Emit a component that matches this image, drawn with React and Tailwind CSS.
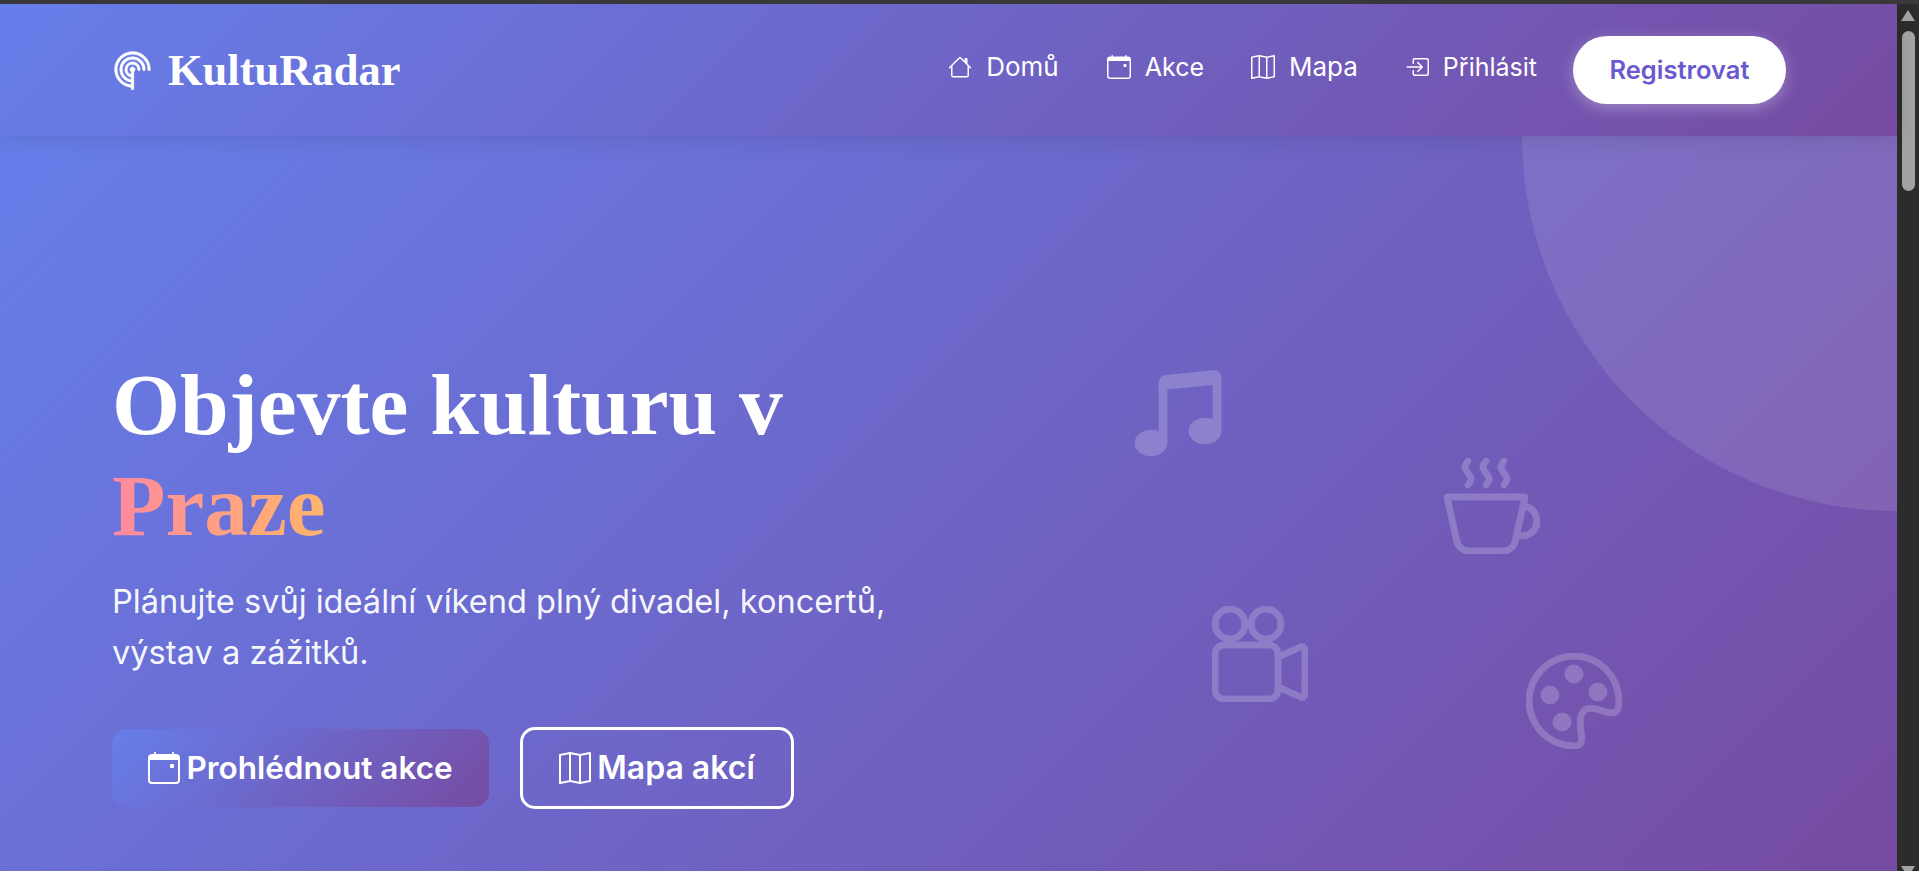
import { BsRadar, BsHouse, BsCalendarEvent, BsMap, BsBoxArrowInRight, BsMusicNoteBeamed, BsCupHot, BsCameraReels, BsPalette } from "react-icons/bs";

const NAV = [
  { label: "Domů", Icon: BsHouse, cls: "text-[26px]" },
  { label: "Akce", Icon: BsCalendarEvent, cls: "text-[25px] ml-[48px]" },
  { label: "Mapa", Icon: BsMap, cls: "text-[26px] ml-[47px]" },
  { label: "Přihlásit", Icon: BsBoxArrowInRight, cls: "text-[25px] ml-[47px]" },
];

function Header() {
  return (
    <header className="h-[132px] shrink-0 flex items-center justify-between pl-[112px] pr-[111px] bg-[linear-gradient(135deg,#667eea_0%,#764ba2_100%)] shadow-[0_4px_20px_rgba(0,0,0,0.1)] relative z-10">
      <div className="flex items-center gap-[15px] text-white">
        <BsRadar className="w-[41px] h-[41px] -mt-[2px]" stroke="currentColor" strokeWidth="0.2" />
        <span className="text-[44.5px] font-bold leading-none font-['Liberation_Serif',serif]">KultuRadar</span>
      </div>
      <nav className="flex items-center font-['Inter',sans-serif] text-white">
        {NAV.map(({ label, Icon, cls }) => (
          <a key={label} className={`flex items-center gap-[14px] leading-none -mt-[6px] ${cls}`}>
            <Icon className="w-[24px] h-[24px]" />
            {label}
          </a>
        ))}
        <button className="ml-[36px] w-[213px] h-[68px] rounded-full bg-white text-[#6a5acd] text-[25.5px] font-semibold shadow-[0_4px_15px_rgba(255,255,255,0.3)]">
          Registrovat
        </button>
      </nav>
    </header>
  );
}

function Hero() {
  return (
    <section className="relative flex-1 overflow-hidden bg-[linear-gradient(135deg,#667eea_0%,#764ba2_100%)] pl-[112px] pr-[112px] pt-[218px] flex text-white">
      {/* big circle in the corner */}
      <div className="absolute -top-[375px] -right-[375px] w-[750px] h-[750px] rounded-full bg-white/10" />

      <div className="w-[852px] shrink-0">
        <h1 className="text-[87.5px] leading-[101px] font-bold font-['Liberation_Serif',serif]">
          Objevte kulturu v
          <br />
          <span className="inline-block bg-[linear-gradient(90deg,#ff8a9f,#ffb56b)] bg-clip-text text-transparent">Praze</span>
        </h1>
        <p className="mt-[20px] text-[32.6px] leading-[51px] font-['Inter',sans-serif] text-white/95">
          Plánujte svůj ideální víkend plný divadel, koncertů,
          <br />
          výstav a zážitků.
        </p>
        <div className="mt-[49px] flex items-center gap-[31px] font-['Inter',sans-serif]">
          <button className="w-[377px] h-[78px] rounded-[15px] flex items-center justify-center gap-[6px] text-[31.5px] font-semibold bg-[linear-gradient(135deg,#667eea,#764ba2)]">
            <BsCalendarEvent className="w-[32px] h-[32px]" />
            Prohlédnout akce
          </button>
          <button className="w-[274px] h-[82px] rounded-[15px] border-[3px] border-white flex items-center justify-center gap-[6px] text-[32px] font-semibold">
            <BsMap className="w-[32px] h-[32px]" />
            Mapa akcí
          </button>
        </div>
      </div>

      {/* floating icons, white at low opacity */}
      <div className="relative flex-1 text-white">
        <BsMusicNoteBeamed className="absolute left-[166px] top-[11px] w-[96px] h-[96px] opacity-20" stroke="currentColor" strokeWidth="0.45" strokeLinejoin="round" />
        <BsCupHot className="absolute left-[480px] top-[104px] w-[96px] h-[96px] opacity-20" stroke="currentColor" strokeWidth="0.15" />
        <BsCameraReels className="absolute left-[248px] top-[252px] w-[96px] h-[96px] opacity-20" stroke="currentColor" strokeWidth="0.15" />
        <BsPalette className="absolute left-[562px] top-[299px] w-[96px] h-[96px] opacity-20" stroke="currentColor" strokeWidth="0.15" />
      </div>
    </section>
  );
}

function Scrollbar() {
  return (
    <div className="w-[22px] shrink-0 bg-[#2c2c2c] flex flex-col items-center overflow-hidden">
      <div className="mt-[6px] w-0 h-0 border-x-[7px] border-x-transparent border-b-[11px] border-b-[#a3a3a3]" />
      <div className="mt-[10px] w-[13px] h-[160px] rounded-full bg-[#a3a3a3]" />
      <div className="mt-auto -mb-[6px] w-0 h-0 border-x-[7px] border-x-transparent border-t-[11px] border-t-[#a3a3a3]" />
    </div>
  );
}

export default function App() {
  return (
    <div className="h-screen flex flex-col overflow-hidden bg-[#2c2c2c]">
      <div className="h-1 shrink-0 bg-[#3a3a3a]" />
      <div className="flex flex-1 min-h-0">
        <main className="flex-1 min-w-0 flex flex-col">
          <Header />
          <Hero />
        </main>
        <Scrollbar />
      </div>
    </div>
  );
}
